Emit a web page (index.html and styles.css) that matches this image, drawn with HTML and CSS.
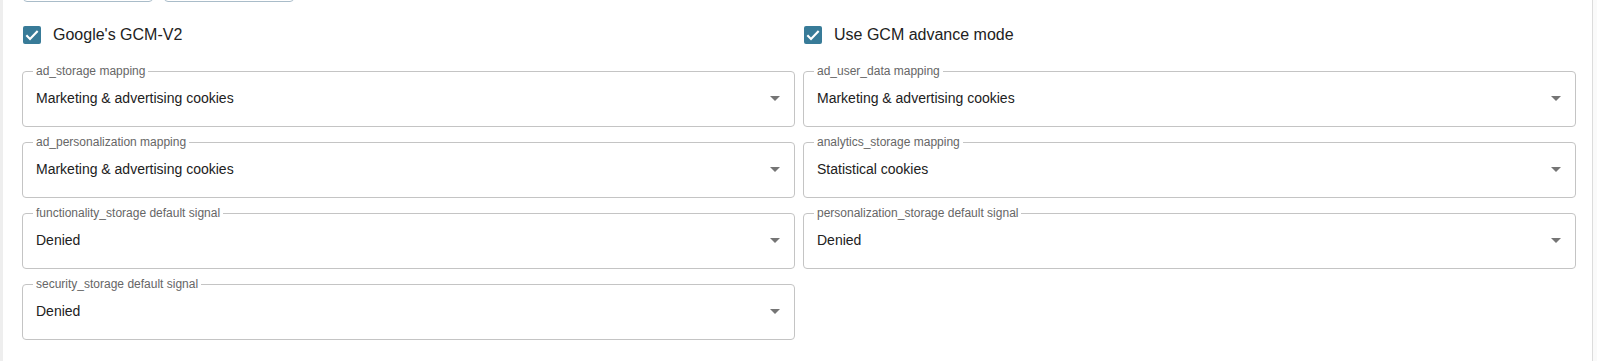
FILE: index.html
```html
<!DOCTYPE html>
<html lang="en">
<head>
  <meta charset="UTF-8"/>
  <title>GCM settings</title>
  <link rel="stylesheet" href="styles.css">
</head>
<body>
  <div class="panel">
    <!-- buttons from the section above, mostly scrolled out -->
    <div class="btn-row">
      <button class="btn"></button>
      <button class="btn"></button>
    </div>

    <div class="grid">
      <label class="check">
        <span class="box"><svg width="16" height="16" viewBox="0 0 24 24"><path d="M3.5 12.5l5.5 5.5L20.5 6" fill="none" stroke="#fff" stroke-width="3.2"/></svg></span>
        <span class="check-label">Google's GCM-V2</span>
      </label>
      <label class="check">
        <span class="box"><svg width="16" height="16" viewBox="0 0 24 24"><path d="M3.5 12.5l5.5 5.5L20.5 6" fill="none" stroke="#fff" stroke-width="3.2"/></svg></span>
        <span class="check-label">Use GCM advance mode</span>
      </label>

      <fieldset class="field">
        <legend>ad_storage mapping</legend>
        <div class="value"><span>Marketing &amp; advertising cookies</span><svg class="arrow" width="10" height="5" viewBox="0 0 10 5"><path d="M0 0l5 5 5-5z"/></svg></div>
      </fieldset>
      <fieldset class="field">
        <legend>ad_user_data mapping</legend>
        <div class="value"><span>Marketing &amp; advertising cookies</span><svg class="arrow" width="10" height="5" viewBox="0 0 10 5"><path d="M0 0l5 5 5-5z"/></svg></div>
      </fieldset>

      <fieldset class="field">
        <legend>ad_personalization mapping</legend>
        <div class="value"><span>Marketing &amp; advertising cookies</span><svg class="arrow" width="10" height="5" viewBox="0 0 10 5"><path d="M0 0l5 5 5-5z"/></svg></div>
      </fieldset>
      <fieldset class="field">
        <legend>analytics_storage mapping</legend>
        <div class="value"><span>Statistical cookies</span><svg class="arrow" width="10" height="5" viewBox="0 0 10 5"><path d="M0 0l5 5 5-5z"/></svg></div>
      </fieldset>

      <fieldset class="field">
        <legend>functionality_storage default signal</legend>
        <div class="value"><span>Denied</span><svg class="arrow" width="10" height="5" viewBox="0 0 10 5"><path d="M0 0l5 5 5-5z"/></svg></div>
      </fieldset>
      <fieldset class="field">
        <legend>personalization_storage default signal</legend>
        <div class="value"><span>Denied</span><svg class="arrow" width="10" height="5" viewBox="0 0 10 5"><path d="M0 0l5 5 5-5z"/></svg></div>
      </fieldset>

      <fieldset class="field">
        <legend>security_storage default signal</legend>
        <div class="value"><span>Denied</span><svg class="arrow" width="10" height="5" viewBox="0 0 10 5"><path d="M0 0l5 5 5-5z"/></svg></div>
      </fieldset>
    </div>
  </div>
</body>
</html>
```

FILE: styles.css
```css
body {
  margin: 0;
  background: #fafafa;
  font-family: "Liberation Sans", Arial, sans-serif;
  color: #212121;
  overflow: hidden;
}
.panel {
  width: 1593px;
  min-height: 400px;
  background: #fff;
  border-left: 3px solid #eeeeee;
  border-right: 1px solid #dcdcdc;
  padding: 0 16px 0 19px;
  box-sizing: border-box;
}
/* BUTTONS (cut off at the top) */
.btn-row {
  display: flex;
  gap: 11px;
  margin: -34px 0 12px 1px;
}
.btn {
  width: 130px;
  height: 36px;
  border: 1px solid #a9bcc9;
  border-radius: 4px;
  background: #fff;
}
/* GRID */
.grid {
  display: grid;
  grid-template-columns: 1fr 1fr;
  gap: 8px;
}
.check {
  display: flex;
  align-items: center;
  height: 42px;
  padding-left: 1px;
  gap: 12px;
}
.box {
  width: 18px;
  height: 18px;
  border-radius: 2px;
  background: #387b98;
  display: flex;
  align-items: center;
  justify-content: center;
}
.check-label {
  font-size: 16px;
  color: #222;
}
/* SELECT FIELDS */
.field {
  margin: 0;
  min-width: 0;
  border: 1px solid #c4c4c4;
  border-radius: 4px;
  padding: 0 7px 18px 13px;
}
.field legend {
  font-size: 12px;
  line-height: 14px;
  color: #666;
  padding: 0 3px;
  margin-left: -3px;
}
.field .value {
  display: flex;
  justify-content: space-between;
  align-items: center;
  height: 20px;
  margin-top: 10px;
  font-size: 14px;
}
.field .arrow {
  fill: #757575;
  margin-right: 7px;
}
```
